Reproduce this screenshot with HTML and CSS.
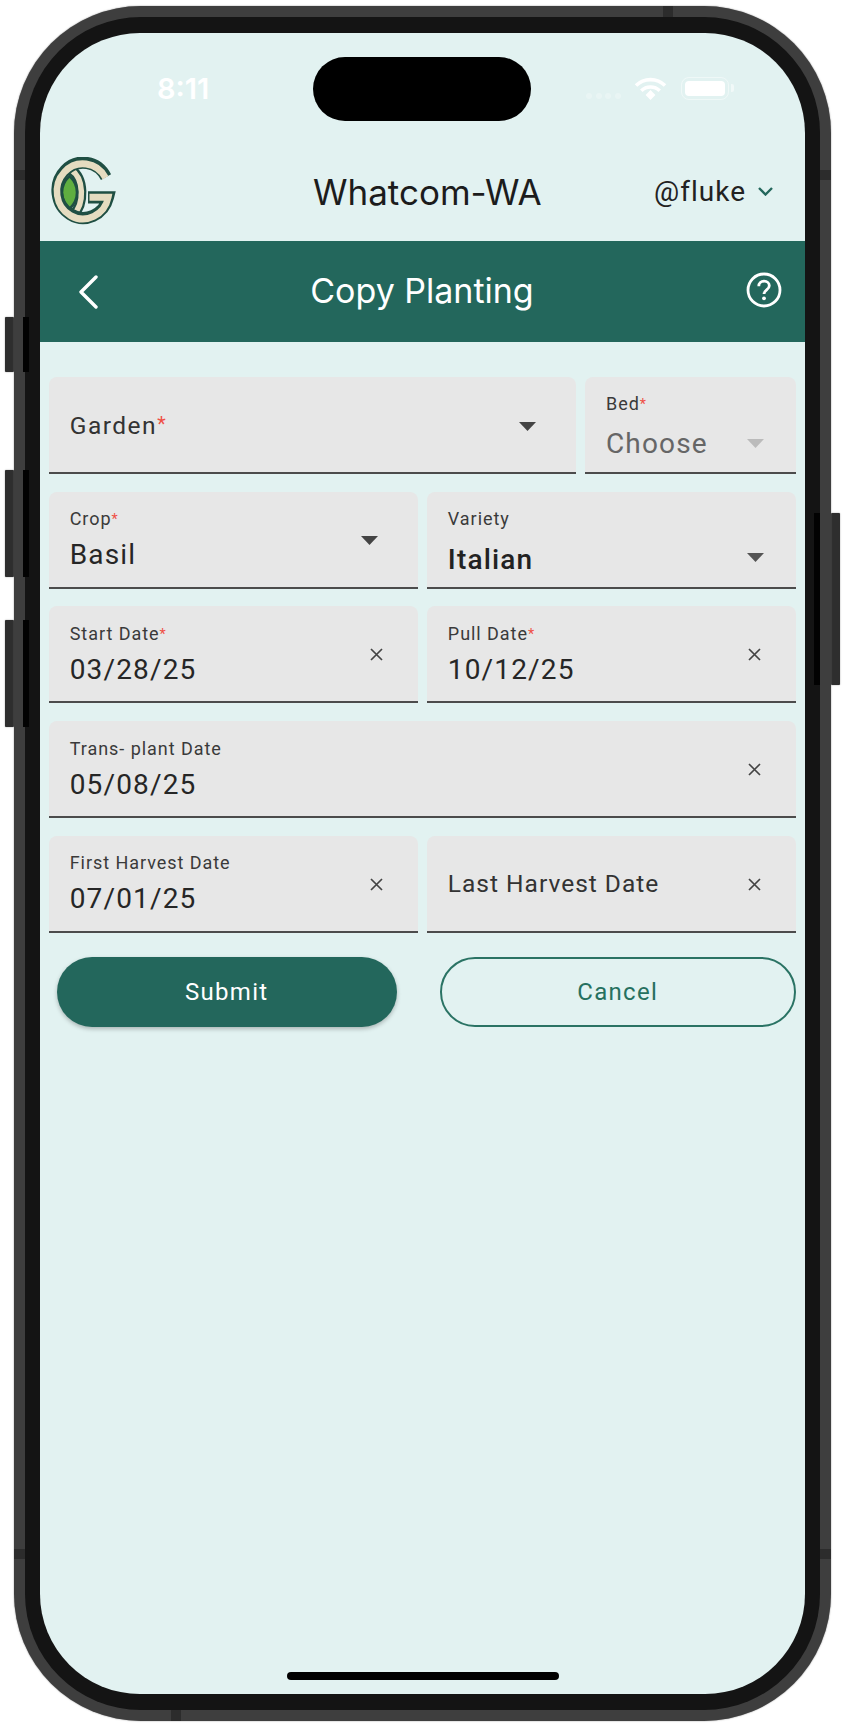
FILE: index.html
```html
<!DOCTYPE html>
<html lang="en">
<head>
<meta charset="utf-8">
<title>Copy Planting</title>
<link rel="stylesheet" href="styles.css">
</head>
<body>
<div class="device">
  <span class="side side-l1"></span><span class="side side-l2"></span><span class="side side-l3"></span><span class="side side-r"></span>
  <span class="strip strip-l1"></span><span class="strip strip-l2"></span><span class="strip strip-l3"></span><span class="strip strip-r"></span>
  <span class="mark mark-lt"></span><span class="mark mark-lb"></span><span class="mark mark-rt"></span><span class="mark mark-rb"></span><span class="mark mark-t"></span><span class="mark mark-b"></span>
  <div class="bezel">
    <div class="glass">
    <div class="screen">
      <div class="status">
        <span class="time">8:11</span>
        <div class="island"></div>
        <div class="dots"><i></i><i></i><i></i><i></i></div>
        <svg class="wifi" viewBox="0 0 33 23" width="33" height="23"><path d="M2 8.6a20.500 20.500 0 0 1 29 0" fill="none" stroke="#fff" stroke-width="3.600"/><path d="M7.300 13.800a13 13 0 0 1 18.400 0" fill="none" stroke="#fff" stroke-width="3.600"/><path d="M11.600 18l4.900-5 4.900 5-4.900 5z" fill="#fff"/></svg>
        <div class="battery"><div class="battery-fill"></div></div>
        <span class="battery-nub"></span>
      </div>
      <header class="topbar">
        <svg class="logo" viewBox="0 0 66 66" width="66" height="70" preserveAspectRatio="none">
          <path d="M21 12C34 20 35 44 23 55" fill="none" stroke="#1f4f43" stroke-width="10"/>
          <path d="M21 12C34 20 35 44 23 55" fill="none" stroke="#e5dcc0" stroke-width="5.500"/>
          <path d="M19.500 18C29.500 27 29.500 40 19.500 49C9.500 40 9.500 27 19.500 18Z" fill="#5fae40" stroke="#1f4f43" stroke-width="2.500"/>
          <path d="M56 19A26 26 0 1 0 58.300 38H38" fill="none" stroke="#1f4f43" stroke-width="11.500" stroke-linejoin="miter"/>
          <path d="M55.500 19.500A26 26 0 1 0 58.300 38H39.500" fill="none" stroke="#e5dcc0" stroke-width="6.500" stroke-linejoin="miter"/>
        </svg>
        <h1 class="site">Whatcom-WA</h1>
        <div class="user"><span>@fluke</span>
          <svg viewBox="0 0 15 9" width="15" height="9"><path d="M1 1l6.500 6.500L14 1" fill="none" stroke="#23675c" stroke-width="2.400"/></svg>
        </div>
      </header>
      <div class="titlebar">
        <svg class="back" viewBox="0 0 20 34" width="20" height="34"><path d="M18 2L3 17l15 15" fill="none" stroke="#fff" stroke-width="3.400" stroke-linecap="round" stroke-linejoin="round"/></svg>
        <h2 class="title">Copy Planting</h2>
        <svg class="help" viewBox="0 0 36 36" width="36" height="36"><circle cx="18" cy="18" r="16" fill="none" stroke="#fff" stroke-width="2.800"/><path d="M12.800 14.200c0-3 2.300-5 5.300-5s5.200 1.900 5.200 4.600c0 4-5.300 4.200-5.300 8.200" fill="none" stroke="#fff" stroke-width="2.800"/><circle cx="18" cy="26.300" r="1.900" fill="#fff"/></svg>
      </div>
      <main class="form">
        <div class="row">
          <div class="field grow">
            <span class="big big-garden">Garden<em class="star">*</em></span>
            <svg class="arrow arrow-garden" viewBox="0 0 17 9" width="17" height="9"><path d="M0 0h17l-8.500 9z"/></svg>
          </div>
          <div class="field bed">
            <div class="stack stack-bed"><span class="label">Bed<em class="star">*</em></span><span class="value value-muted">Choose</span></div>
            <svg class="arrow arrow-off" viewBox="0 0 17 9" width="17" height="9"><path d="M0 0h17l-8.500 9z"/></svg>
          </div>
        </div>
        <div class="row">
          <div class="field half">
            <div class="stack"><span class="label">Crop<em class="star">*</em></span><span class="value">Basil</span></div>
            <svg class="arrow arrow-crop" viewBox="0 0 17 9" width="17" height="9"><path d="M0 0h17l-8.500 9z"/></svg>
          </div>
          <div class="field half">
            <div class="stack stack-variety"><span class="label">Variety</span><span class="value value-strong">Italian</span></div>
            <svg class="arrow arrow-variety" viewBox="0 0 17 9" width="17" height="9"><path d="M0 0h17l-8.500 9z"/></svg>
          </div>
        </div>
        <div class="row">
          <div class="field half">
            <div class="stack"><span class="label">Start Date<em class="star">*</em></span><span class="value">03/28/25</span></div>
            <svg class="clear" viewBox="0 0 13 13" width="13" height="13"><path d="M1 1l11 11M12 1L1 12"/></svg>
          </div>
          <div class="field half">
            <div class="stack"><span class="label">Pull Date<em class="star">*</em></span><span class="value">10/12/25</span></div>
            <svg class="clear" viewBox="0 0 13 13" width="13" height="13"><path d="M1 1l11 11M12 1L1 12"/></svg>
          </div>
        </div>
        <div class="row">
          <div class="field grow">
            <div class="stack"><span class="label">Trans- plant Date</span><span class="value">05/08/25</span></div>
            <svg class="clear" viewBox="0 0 13 13" width="13" height="13"><path d="M1 1l11 11M12 1L1 12"/></svg>
          </div>
        </div>
        <div class="row">
          <div class="field half">
            <div class="stack"><span class="label">First Harvest Date</span><span class="value">07/01/25</span></div>
            <svg class="clear" viewBox="0 0 13 13" width="13" height="13"><path d="M1 1l11 11M12 1L1 12"/></svg>
          </div>
          <div class="field half">
            <span class="big">Last Harvest Date</span>
            <svg class="clear" viewBox="0 0 13 13" width="13" height="13"><path d="M1 1l11 11M12 1L1 12"/></svg>
          </div>
        </div>
        <div class="actions">
          <button class="btn btn-primary" type="button">Submit</button>
          <button class="btn btn-outline" type="button">Cancel</button>
        </div>
      </main>
      <div class="home"></div>
    </div>
    </div>
  </div>
</div>
</body>
</html>
```
FILE: styles.css
```css
* { box-sizing: border-box; }
html, body { margin: 0; padding: 0; background: #fff; }
body { width: 852px; height: 1726px; overflow: hidden; font-family: Roboto, "Liberation Sans", sans-serif; }

.device { position: relative; isolation: isolate; width: 817px; height: 1715px; margin: 6px 0 0 14px; }
.bezel { width: 100%; height: 100%; padding: 11px; background: #3e3e3e; border-radius: 127px; box-shadow: 0 0 1.500px #777; }
.glass { width: 100%; height: 100%; padding: 16px 15px 15px; background: #141414; border-radius: 116px; }
.screen { position: relative; display: flex; flex-direction: column; width: 765px; height: 1661px; background: #e2f2f1; border-radius: 100px; overflow: hidden; }

.side { position: absolute; z-index: -1; width: 9px; background: #2e2e2e; box-shadow: 0 0 1.500px #888; border-radius: 1px; }
.side-l1 { left: -9px; top: 311px; height: 55px; }
.side-l2 { left: -9px; top: 464px; height: 107px; }
.side-l3 { left: -9px; top: 614px; height: 107px; }
.side-r { left: 817px; top: 507px; height: 172px; }
.strip { position: absolute; z-index: 2; width: 6px; background: #020202; filter: blur(0.500px); }
.strip-l1 { left: 9px; top: 311px; height: 55px; }
.strip-l2 { left: 9px; top: 464px; height: 107px; }
.strip-l3 { left: 9px; top: 614px; height: 107px; }
.strip-r { left: 800px; top: 507px; height: 172px; }
.mark { position: absolute; z-index: 2; background: #2c2c2c; }
.mark-lt, .mark-lb, .mark-rt, .mark-rb { width: 11px; height: 10px; }
.mark-t, .mark-b { width: 10px; height: 11px; }
.mark-lt { left: 0; top: 164px; }
.mark-lb { left: 0; top: 1543px; }
.mark-rt { left: 806px; top: 164px; }
.mark-rb { left: 806px; top: 1543px; }
.mark-t { left: 649px; top: 0; }
.mark-b { left: 157px; top: 1704px; }

.status { display: flex; align-items: flex-start; height: 108px; padding: 24px 0 0 117px; flex: none; }
.time { width: 156px; margin-top: 12px; font: 600 29px/40px Inter, sans-serif; color: #fff; }
.island { width: 218px; height: 64px; background: #000; border-radius: 32px; flex: none; }
.dots { display: flex; gap: 3.500px; margin: 36px 0 0 55px; }
.dots i { width: 6px; height: 6px; border-radius: 50%; background: #fff; opacity: 0.25; }
.wifi { margin: 20px 0 0 13.500px; flex: none; }
.battery { width: 48px; height: 23px; margin: 20px 0 0 14px; padding: 3px; border: 1.500px solid rgba(255,255,255,0.45); border-radius: 8px; flex: none; }
.battery-fill { width: 100%; height: 100%; background: #fff; border-radius: 4px; }
.battery-nub { width: 2.500px; height: 8px; margin: 27px 0 0 2px; background: rgba(255,255,255,0.5); border-radius: 0 2px 2px 0; }

.topbar { position: relative; display: flex; align-items: center; height: 100px; padding: 0 0 0 10px; flex: none; }
.logo { flex: none; margin-top: 1px; }
.site { margin: 1.500px 0 0 197px; font: 400 35px/40px Inter, sans-serif; color: #1c1c1c; white-space: nowrap; }
.user { display: flex; align-items: center; margin: 1.500px 0 0 auto; padding-right: 32px; gap: 12px; font: 400 28px/36px Roboto, sans-serif; letter-spacing: 1px; color: #222; }

.titlebar { display: flex; align-items: center; height: 101px; padding: 0 23px 0 38px; background: #23675c; color: #fff; flex: none; }
.back { flex: none; }
.title { flex: 1; margin: -2px 0 0; text-align: center; font: 400 34px/44px Inter, sans-serif; color: #fff; }
.help { flex: none; margin-top: -4px; }

.form { display: flex; flex-direction: column; gap: 17.700px; padding: 35px 9px 0 8.700px; }
.row { display: flex; gap: 9px; height: 97px; }
.field { position: relative; display: flex; align-items: center; justify-content: space-between; height: 97px; padding: 0 29px 0 21px; background: #e7e7e7; border-bottom: 2px solid #4c4c4c; border-radius: 8px 8px 0 0; }
.grow { flex: 1; }
.half { flex: 1 1 0; }
.bed { width: 211px; flex: none; padding-right: 32px; }
.stack { display: flex; flex-direction: column; padding-top: 3px; }
.stack-variety { padding-top: 8px; }
.stack-bed { padding-top: 6px; }
.label { font-size: 18px; line-height: 22px; letter-spacing: 0.950px; color: #3a3a3a; white-space: nowrap; }
.value { margin-top: 7px; font-size: 28px; line-height: 36px; letter-spacing: 1.150px; color: #262626; white-space: nowrap; }
.value-muted { margin-top: 11px; color: #666; }
.value-strong { margin-top: 12px; font-weight: 500; color: #222; }
.big { margin-top: 2px; font-size: 24.500px; line-height: 32px; letter-spacing: 1px; color: #333; white-space: nowrap; }
.big-garden { letter-spacing: 1.500px; }
.star { font-style: normal; color: #ef4f45; font-size: 0.800em; vertical-align: 0.150em; letter-spacing: 0; }
.label .star { vertical-align: 0.100em; }
.arrow { flex: none; fill: #444; }
.arrow-garden { margin: 3px 11px 0 0; }
.arrow-crop { margin: 2px 11px 0 0; }
.arrow-variety { margin: 36px 3px 0 0; fill: #555; }
.arrow-off { fill: #bbb; margin: 38px 0 0 0; }
.clear { flex: none; fill: none; stroke: #444; stroke-width: 1.700px; margin: 2px 6px 0 0; }

.actions { display: flex; margin-top: 6.500px; padding-left: 8px; }
.btn { height: 70px; border-radius: 35px; font: 400 24px/30px Roboto, sans-serif; letter-spacing: 1.300px; cursor: pointer; }
.btn-primary { width: 340px; border: 0; background: #23675c; color: #fff; box-shadow: 0 2px 4px rgba(0,0,0,0.25); }
.btn-outline { width: 356px; margin-left: 43px; border: 2px solid #2a7364; background: transparent; color: #26705f; }

.home { position: absolute; left: 247px; bottom: 14px; width: 272px; height: 8px; background: #000; border-radius: 4px; }
```
